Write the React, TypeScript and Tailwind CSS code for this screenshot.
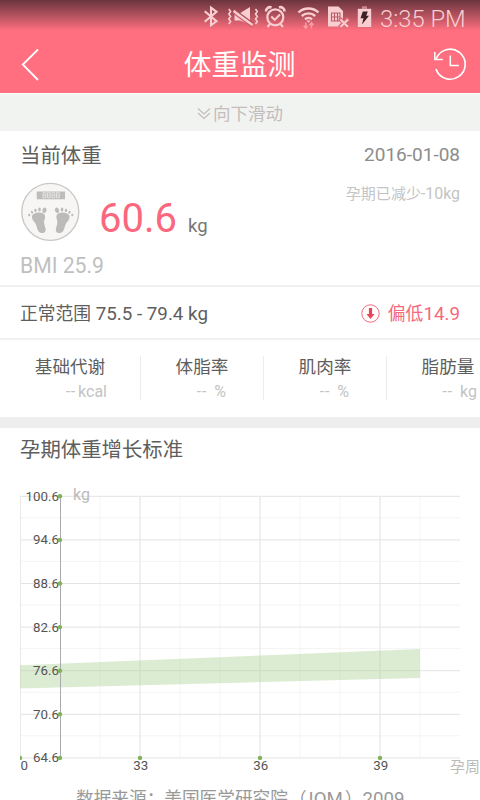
import type { ReactNode } from 'react'

const metrics = [
  { name: '基础代谢', value: '--', unit: 'kcal', cell: 'w-[141px]', box: 'w-[74px]', gap: 'gap-[2px]' },
  { name: '体脂率', value: '--', unit: '%', cell: 'w-[123px]', box: 'w-[48px]', gap: 'gap-[7px]' },
  { name: '肌肉率', value: '--', unit: '%', cell: 'w-[123px]', box: 'w-[48px]', gap: 'gap-[7px]' },
  { name: '脂肪量', value: '--', unit: 'kg', cell: 'w-[123px]', box: 'w-[58px]', gap: 'gap-[7px]' },
]

const yLabels = ['100.6', '94.6', '88.6', '82.6', '76.6', '70.6', '64.6']
const xLabels = [
  { text: '33', x: 140 },
  { text: '36', x: 260 },
  { text: '39', x: 380 },
]

const CHART_TOP = 16
const STEP = 43.6

// Chinese glyphs sit slightly smaller than the latin digits next to them
function Zh({ children }: { children: ReactNode }) {
  return <span className="text-[0.945em]">{children}</span>
}

function StatusIcons() {
  return (
    <svg width="174" height="30" viewBox="200 0 174 30" fill="none" stroke="#f9ced1" strokeWidth="2" className="shrink-0">
      {/* bluetooth */}
      <path d="M204.7 11.2 216.5 21.3 211 25.3V7.7L216.5 11.8 204.7 21.8" strokeWidth="2.1" />
      {/* vibrate + mute */}
      <path
        d="M228.8 9l1.8 2.5-1.8 2.5 1.8 2.5-1.8 2.5 1.8 2.5-1.8 2.5M255.5 9l1.8 2.5-1.8 2.5 1.8 2.5-1.8 2.5 1.8 2.5-1.8 2.5"
        strokeWidth="1.6"
      />
      <path d="M234.5 13.5h5l10.500-6.500v17.500L240 20.500h-5.500z" fill="#f9ced1" stroke="none" />
      <path d="M234 9.500 253 23.500" stroke="#a9525d" strokeWidth="2" />
      <path d="M233.500 11 252.500 25" strokeWidth="2.200" />
      <path d="M233 13 252 27" stroke="#cb5e6b" strokeWidth="1.300" />
      {/* alarm */}
      <circle cx="275.300" cy="17.300" r="8" strokeWidth="2.200" />
      <path d="M271.300 16.500l3.400 3.400 5.300-5.400M270 24l-2.500 3M280.500 24l2.500 3" />
      <path d="M266 11.500a4 4 0 0 1 5.500-4M284.500 11.500a4 4 0 0 0-5.500-4" strokeWidth="2.600" />
      {/* wifi */}
      <path d="M298.500 12.500a14.500 14.500 0 0 1 20 0M301.800 16a9.800 9.800 0 0 1 13.400 0M305 19.300a5.200 5.200 0 0 1 7 0" strokeWidth="2.400" />
      <path d="M306.300 20.500h4.400l-2.200 2.300z" fill="#f9ced1" stroke="none" />
      <path d="M305.700 22.500v5.500m-2-2.200 2 2.500 2-2.500M311.500 28.500v-5.500m-2 2.200 2-2.500 2 2.500" stroke="#f79ba4" strokeWidth="1.500" />
      {/* sim */}
      <path d="M328 6.500h10.500l4.500 4.500v15.500h-15z" fill="#f9ced1" stroke="none" />
      <path d="M331.500 13h8.500v8h-8.500zM334.500 13v8M337.500 13v8M331.500 17h8.500" stroke="#b85d68" strokeWidth="1.100" />
      <path d="M339.500 18.500l9 9M348.500 18.500l-9 9" stroke="#dc6977" strokeWidth="4.200" />
      <path d="M340.500 19.500l7.500 7.500M348 19.500l-7.500 7.500" strokeWidth="1.900" />
      {/* battery */}
      <path d="M362 6.300h5v2.500h-5z" fill="#c98a92" stroke="none" />
      <path d="M357.800 8.800h13.400v18.200h-13.400z" fill="#f9ced1" stroke="none" />
      <path d="M362.800 11.500h5l-1.600 4.200h2.800l-7 8.800 1.500-6.200h-3z" fill="#3c2026" stroke="none" />
    </svg>
  )
}

function Foot({ flip }: { flip?: boolean }) {
  return (
    <g transform={flip ? 'translate(61.500 0) scale(-1 1)' : undefined} fill="#bdbaba">
      <path d="M12 34.500c.600-4.500 11-5.500 12.800-1.500 1.200 3.200-1.300 5-.500 9 .700 3 2.200 5.500 1 7.500-1.500 2.300-5.500 2-7.200-.800-1.500-2.700-1.200-5.300-3-7.800-1.500-2-3.500-3.700-3.100-6.400z" />
      <ellipse cx="24.500" cy="28.300" rx="2" ry="2.700" transform="rotate(20 24.500 28.300)" />
      <ellipse cx="19.500" cy="27.500" rx="1.300" ry="1.900" />
      <ellipse cx="15.500" cy="28.400" rx="1.200" ry="1.700" transform="rotate(-15 15.500 28.400)" />
      <ellipse cx="12" cy="30.300" rx="1.100" ry="1.500" transform="rotate(-30 12 30.300)" />
      <ellipse cx="9.200" cy="33" rx="1" ry="1.300" transform="rotate(-40 9.200 33)" />
    </g>
  )
}

function ScaleIcon() {
  return (
    <svg width="61" height="61" viewBox="0 0 61 61">
      <circle cx="30.300" cy="29.800" r="28.500" fill="#f8f5f5" stroke="#c9c6c6" strokeWidth="1.300" />
      <rect x="16.700" y="9.500" width="28.300" height="7.800" fill="#bfbcbc" />
      <g fill="none" stroke="#eceaea" strokeWidth=".8">
        {[23, 27.5, 32, 36.5].map((x) => (
          <path key={x} d={`M${x} 10.700h2.800v5h-2.800zM${x} 13.200h2.800`} />
        ))}
      </g>
      <Foot />
      <Foot flip />
    </svg>
  )
}

function GrowthChart() {
  return (
    <svg width="460" height="302" viewBox="20 0 460 302" className="block" fontSize="13.300" fill="#555">
      {/* grid */}
      {[100, 180, 220, 300, 340, 420].map((x) => (
        <path key={x} d={`M${x} 16V278`} stroke="#f5f5f5" />
      ))}
      {yLabels.slice(1).map((label, i) => {
        const y = CHART_TOP + STEP * (i + 0.5)
        return <path key={label} d={`M20 ${y}H460`} stroke="#f4f4f4" />
      })}
      {yLabels.map((label, i) => {
        const y = CHART_TOP + STEP * i + 0.3
        return <path key={label} d={`M20 ${y}H460`} stroke="#e3e3e3" />
      })}
      <path d="M20.500 16V278" stroke="#e9e9e9" />
      {xLabels.map(({ x }) => (
        <path key={x} d={`M${x} 16V278`} stroke="#e8e8e8" strokeWidth="1.300" />
      ))}

      {/* recommended range */}
      <path d="M20 185.300 420 169V198L20 208.500z" fill="#add298" fillOpacity=".43" />

      {/* axes */}
      <path d="M60.500 16V278" stroke="#aaa" />
      {yLabels.map((label, i) => {
        const y = CHART_TOP + STEP * i
        return (
          <g key={label}>
            <text x="59" y={y + 4.8} textAnchor="end">{label}</text>
            <circle cx="60" cy={y + 0.3} r="2.200" fill="#7fb25a" />
          </g>
        )
      })}
      <path d="M20 275.700a2.200 2.200 0 0 1 0 4.400z" fill="#7fb25a" />
      <text x="20.500" y="290.300">0</text>
      {xLabels.map(({ text, x }) => (
        <g key={x}>
          <circle cx={x} cy="277.900" r="2.200" fill="#7fb25a" />
          <text x={x + 0.7} y="290.300" textAnchor="middle">{text}</text>
        </g>
      ))}
      <text x="73" y="20.400" fontSize="16" fill="#bbb">kg</text>
      <text x="450" y="291.500" fontSize="15" fill="#bbb">孕周</text>
    </svg>
  )
}

export default function App() {
  return (
    <div className="flex h-[800px] w-[480px] flex-col overflow-hidden bg-white font-[Roboto,'Noto_Sans_CJK_SC',sans-serif] text-[#5e5e5e]">
      <header className="flex h-[93px] shrink-0 flex-col bg-[#ff6f7f]">
        <div className="flex h-[36px] items-start justify-end bg-linear-to-b from-[#6b353e] to-[#ff6f7f] to-85% pr-[13px] text-[#f9ced1]">
          <StatusIcons />
          <span className="ml-[6px] w-[87px] pt-[5px] text-[23.800px] leading-[28px] font-light whitespace-nowrap">3:35 PM</span>
        </div>
        <div className="flex h-[57px] items-center justify-between pr-[13px] pl-[21px] text-white">
          <svg width="34" height="34" viewBox="0 0 34 34" fill="none" stroke="white" strokeWidth="1.800">
            <path d="M17 1.500 1.800 16.500 17 32" />
          </svg>
          <h1 className="mr-[9px] pt-[2px] text-[28px] leading-[40px]">体重监测</h1>
          <svg width="34" height="34" viewBox="0 0 34 34" fill="none" stroke="white" strokeWidth="1.700">
            <path d="M3.200 10.800A15 15 0 1 1 3 21" />
            <path d="M1.800 4v7.500h8M17.300 7.500v10h8.500" strokeWidth="1.500" />
          </svg>
        </div>
      </header>

      <div className="flex h-[39px] shrink-0 items-center justify-center gap-[2px] border-t border-b border-t-white border-b-white bg-[#f1f3f1] pt-[3px] text-[17.500px] text-[#c5bcbc]">
        <svg width="14" height="12" viewBox="0 0 14 12" fill="none" stroke="#c5bcbc" strokeWidth="1.200">
          <path d="M1 .5l6 5.500L13 .5M1 5 7 10.500l6-5.500" />
        </svg>
        向下滑动
      </div>

      {/* current weight */}
      <section className="h-[155px] shrink-0 border-b-2 border-[#f0f0f0] px-5">
        <div className="flex h-[46px] items-center justify-between pt-[1px]">
          <h2 className="pt-[1px] text-[20.400px]">当前体重</h2>
          <span className="text-[19px] text-[#8c8c8c]">2016-01-08</span>
        </div>
        <div className="flex h-[70px] items-start justify-between">
          <div className="flex">
            <div className="pt-[4px]">
              <ScaleIcon />
            </div>
            <div className="flex items-baseline gap-[11px] pt-[18px] pl-[18px]">
              <span className="text-[40px] leading-[46px] text-[#f9687c]">60.6</span>
              <span className="text-[18.500px] text-[#777]">kg</span>
            </div>
          </div>
          <span className="pt-[4px] text-[15.900px] text-[#c4c4c4]">
            <Zh>孕期已减少</Zh>-10kg
          </span>
        </div>
        <p className="pt-[3px] text-[21.200px] leading-[30px] text-[#c0bfbf]">BMI 25.9</p>
      </section>

      <section className="flex h-[53px] shrink-0 items-center justify-between border-b-2 border-[#f0f0f0] px-5 pt-[3px] text-[18.800px]">
        <span>
          <Zh>正常范围</Zh> 75.5 - 79.4 kg
        </span>
        <span className="flex items-center gap-[8px] text-[#f4697b]">
          <svg width="19" height="19" viewBox="0 0 19 19" className="mb-[2px]">
            <circle cx="9.500" cy="9.500" r="8.700" fill="none" stroke="#f4697b" />
            <path d="M7.900 4h3.200v6h2.400l-4 5-4-5h2.400z" fill="#ea4459" />
          </svg>
          <span>
            <Zh>偏低</Zh>14.9
          </span>
        </span>
      </section>

      <section className="flex h-[77px] shrink-0 overflow-hidden pt-[16px]">
        {metrics.map((m) => (
          <div key={m.name} className={`flex h-[44px] shrink-0 flex-col items-center border-r border-[#ececec] ${m.cell}`}>
            <span className="text-[17.600px] leading-[22px]">{m.name}</span>
            <span className={`flex justify-end pt-[3px] text-[16px] leading-[22px] text-[#c3c3c3] ${m.box} ${m.gap}`}>
              <span className="tracking-[0.8px]">{m.value}</span>
              <span>{m.unit}</span>
            </span>
          </div>
        ))}
      </section>

      <div className="h-[11px] shrink-0 bg-[#eeeeee]" />

      <section className="shrink-0 pl-5">
        <h2 className="pt-[7px] text-[20.400px] leading-[30px]">孕期体重增长标准</h2>
        <div className="pt-[15px]">
          <GrowthChart />
        </div>
        <p className="pt-[1px] pl-[56px] text-[18.700px] leading-[32px] whitespace-nowrap text-[#999]">
          <Zh>
            数据来源：美国医学研究院<span className="ml-[1px]">（</span>
          </Zh>
          <span className="mx-[2px]">IOM</span>
          <Zh>）</Zh>2009
        </p>
      </section>
    </div>
  )
}
